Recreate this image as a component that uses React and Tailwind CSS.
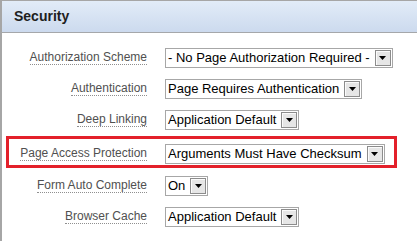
import React from 'react';

const rows = [
  { label: 'Authorization Scheme', value: '- No Page Authorization Required -' },
  { label: 'Authentication', value: 'Page Requires Authentication' },
  { label: 'Deep Linking', value: 'Application Default' },
  { label: 'Page Access Protection', value: 'Arguments Must Have Checksum', hot: true },
  { label: 'Form Auto Complete', value: 'On' },
  { label: 'Browser Cache', value: 'Application Default' },
];

const font = { fontFamily: '"Liberation Sans", Arial, sans-serif' };

const FakeSelect = ({ value }) => (
  <div className="flex h-[20px] border border-[#a7a7a7] bg-white">
    <span className="pl-[2px] pr-[4px] text-[13px] leading-[18px] text-black">{value}</span>
    <span className="m-[1px] flex w-[16px] items-center justify-center border border-[#8c8c8c] bg-[#e6e6e6] shadow-[inset_1px_1px_0_#fbfbfb]">
      <svg width="7" height="4" viewBox="0 0 7 4">
        <polygon points="0,0 7,0 3.5,4" fill="#000" />
      </svg>
    </span>
  </div>
);

const Row = ({ label, value, hot }) => (
  <div
    className={`ml-[4px] flex w-[391px] items-start border-[3px] ${
      hot ? 'border-[#e3202a] pt-[5px] pb-[1px]' : 'border-transparent'
    }`}
  >
    <div className="mt-[2px] flex w-[138px] justify-end">
      <span className="border-b border-dotted border-[#8f8f8f] text-[12px] leading-[14px] text-[#505050]">
        {label}
      </span>
    </div>
    <div className="ml-[18px]">
      <FakeSelect value={value} />
    </div>
  </div>
);

export default function App() {
  return (
    <div className="h-[241px] w-[417px] overflow-hidden bg-white" style={font}>
      <div className="h-full border-l-2 border-t border-[#a6a6a6]">
        {/* header */}
        <div className="flex h-[32px] items-center border-b border-[#a5a7aa] bg-gradient-to-b from-[#e2ecf8] to-[#ccdaee] pl-[12px]">
          <span className="text-[14px] font-bold text-[#1e1e1e]">Security</span>
        </div>

        {/* fields */}
        <div className="flex flex-col pt-[12px]">
          <Row {...rows[0]} />
          <div className="mt-[5px]"><Row {...rows[1]} /></div>
          <div className="mt-[5px]"><Row {...rows[2]} /></div>
          <div className="mt-[3px]"><Row {...rows[3]} /></div>
          <div className="mt-[5px]"><Row {...rows[4]} /></div>
          <div className="mt-[5px]"><Row {...rows[5]} /></div>
        </div>
      </div>
    </div>
  );
}
